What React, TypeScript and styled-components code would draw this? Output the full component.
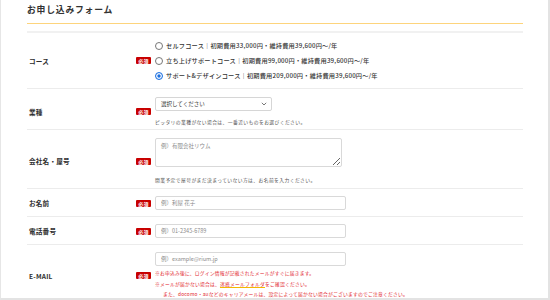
import styled, { createGlobalStyle } from "styled-components";

const GlobalStyle = createGlobalStyle`
  html, body {
    margin: 0;
    padding: 0;
    background: #ffffff;
  }
  body {
    font-family: "Noto Sans CJK JP", "Noto Sans", sans-serif;
    color: #333333;
    -webkit-font-smoothing: antialiased;
  }
  * {
    box-sizing: border-box;
  }
`;

const courses = [
  "セルフコース｜初期費用33,000円・維持費用39,600円〜/年",
  "立ち上げサポートコース｜初期費用99,000円・維持費用39,600円〜/年",
  "サポート&デザインコース｜初期費用209,000円・維持費用39,600円〜/年",
];

const App = () => {
  return (
    <>
      <GlobalStyle />
      <Frame>
        <Card>
          <Title>お申し込みフォーム</Title>
          <YellowRule />
          <GrayRule />

          <Row $pt={5} $pb={5}>
            <Label>コース</Label>
            <Badge>必須</Badge>
            <Content>
              {courses.map((c, i) => (
                <RadioLine key={c}>
                  <RadioDot $checked={i === 2} />
                  <span>{c}</span>
                </RadioLine>
              ))}
            </Content>
          </Row>

          <Row $pt={8} $pb={3}>
            <Label>業種</Label>
            <Badge>必須</Badge>
            <Content>
              <SelectBox>
                <span>選択してください</span>
                <svg width="6" height="4" viewBox="0 0 6 4">
                  <path d="M0.8 0.8 L3 3 L5.2 0.8" fill="none" stroke="#555" strokeWidth="0.8" />
                </svg>
              </SelectBox>
              <Help $mt={7}>ピッタリの業種がない場合は、一番近いものをお選びください。</Help>
            </Content>
          </Row>

          <Row $pt={8} $pb={4}>
            <Label>会社名・屋号</Label>
            <Badge>必須</Badge>
            <Content>
              <TextArea placeholder="例）有限会社リウム" />
              <Help $mt={9}>開業予定で屋号がまだ決まっていない方は、お名前を入力ください。</Help>
            </Content>
          </Row>

          <Row $pt={7} $pb={6}>
            <Label>お名前</Label>
            <Badge>必須</Badge>
            <Content>
              <TextInput placeholder="例）利屋 花子" />
            </Content>
          </Row>

          <Row $pt={7} $pb={6}>
            <Label>電話番号</Label>
            <Badge>必須</Badge>
            <Content>
              <TextInput placeholder="例）01-2345-6789" />
            </Content>
          </Row>

          <Row $pt={7} $pb={0} $last>
            <Label>E-MAIL</Label>
            <Badge>必須</Badge>
            <Content>
              <TextInput placeholder="例）example@rium.jp" />
              <Notes>
                <p>※お申込み後に、ログイン情報が記載されたメールがすぐに届きます。</p>
                <p>
                  ※メールが届かない場合は、<Marked>迷惑メールフォルダ</Marked>をご確認ください。
                </p>
                <p className="indent">
                  また、docomo・auなどのキャリアメールは、設定によって届かない場合がございますのでご注意ください。
                </p>
              </Notes>
            </Content>
          </Row>
        </Card>
      </Frame>
    </>
  );
};

const Frame = styled.div`
  width: 550px;
  height: 300px;
  overflow: hidden;
  border-left: 1px solid #e6e6e6;
  border-right: 2px solid #e3e3e3;
  border-bottom: 2px solid #e3e3e3;
  padding: 3px 0 0 26px;
`;

const Card = styled.div`
  width: 496px;
`;

const Title = styled.h1`
  margin: 0;
  font-size: 8.8px;
  line-height: 13px;
  font-weight: 700;
  letter-spacing: 0.8px;
  color: #333;
`;

const YellowRule = styled.div`
  margin-top: 7px;
  height: 1px;
  background: #fdd47c;
`;

const GrayRule = styled.div`
  margin-top: 7px;
  height: 2px;
  background: #f1f1f1;
`;

const Row = styled.div<{ $pt: number; $pb: number; $last?: boolean }>`
  display: grid;
  grid-template-columns: 103px 15px 1fr;
  column-gap: 4px;
  align-items: center;
  padding: ${(p) => p.$pt}px 0 ${(p) => p.$pb}px 2px;
  border-bottom: ${(p) => (p.$last ? "none" : "1px solid #ececec")};
`;

const Label = styled.div`
  font-size: 6.6px;
  font-weight: 700;
  letter-spacing: 0.2px;
  color: #2e2e2e;
`;

const Badge = styled.span`
  display: inline-flex;
  align-items: center;
  justify-content: center;
  width: 15px;
  height: 7px;
  background: #c80000;
  color: #fff;
  border-radius: 1px;
  font-size: 5px;
  font-weight: 700;
  line-height: 1;
  letter-spacing: 0.3px;
`;

const Content = styled.div`
  display: flex;
  flex-direction: column;
  align-items: flex-start;
`;

const RadioLine = styled.label`
  display: flex;
  align-items: center;
  gap: 3px;
  height: 15px;
  font-size: 6.2px;
  font-weight: 500;
  color: #333;
  letter-spacing: 0.2px;
  white-space: nowrap;
`;

const RadioDot = styled.span<{ $checked?: boolean }>`
  width: 8px;
  height: 8px;
  border-radius: 50%;
  border: 0.8px solid ${(p) => (p.$checked ? "#1a6fe0" : "#777")};
  background: #fff;
  box-shadow: ${(p) => (p.$checked ? "inset 0 0 0 1.3px #fff, inset 0 0 0 4px #1a6fe0" : "none")};
  flex: none;
`;

const SelectBox = styled.div`
  display: flex;
  align-items: center;
  justify-content: space-between;
  width: 117px;
  height: 14px;
  padding: 0 4px 0 5px;
  border: 1px solid #d6d6d6;
  border-radius: 2px;
  font-size: 5.5px;
  color: #333;
`;

const fieldBase = `
  display: block;
  border: 1px solid #d9d9d9;
  border-radius: 2px;
  font-family: "Noto Sans CJK JP", "Noto Sans", sans-serif;
  font-size: 5.5px;
  color: #333;
  outline: none;
  background: #fff;
  &::placeholder {
    color: #8a8a8a;
  }
`;

const TextArea = styled.textarea`
  ${fieldBase}
  width: 187px;
  height: 29px;
  padding: 3px 5px;
  resize: vertical;
`;

const TextInput = styled.input`
  ${fieldBase}
  width: 191px;
  height: 14px;
  padding: 0 5px;
`;

const Help = styled.p<{ $mt: number }>`
  margin: ${(p) => p.$mt}px 0 0;
  font-size: 4.8px;
  line-height: 8px;
  color: #555;
  letter-spacing: 0.4px;
  white-space: nowrap;
`;

const Notes = styled.div`
  margin-top: 2px;
  color: #e2242b;
  font-size: 4.8px;
  letter-spacing: 0.2px;
  white-space: nowrap;

  p {
    margin: 0;
    line-height: 10.5px;
  }

  .indent {
    padding-left: 8px;
  }
`;

const Marked = styled.span`
  text-decoration: underline;
  text-decoration-color: #f5b700;
  text-decoration-thickness: 1px;
  text-underline-offset: 1px;
`;

export default App;
